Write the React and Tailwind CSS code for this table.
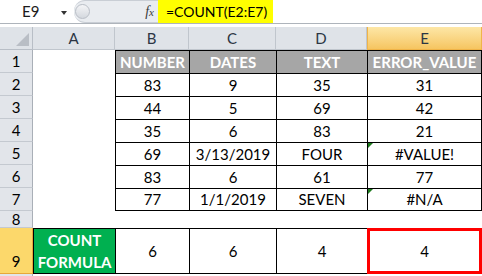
import React from "react";

const COLS = ["A", "B", "C", "D", "E"];

const DATA = [
  ["83", "9", "35", "31"],
  ["44", "5", "69", "42"],
  ["35", "6", "83", "21"],
  ["69", "3/13/2019", "FOUR", "#VALUE!"],
  ["83", "6", "61", "77"],
  ["77", "1/1/2019", "SEVEN", "#N/A"],
];

const HEAD = ["NUMBER", "DATES", "TEXT", "ERROR_VALUE"];

function RowHead({ n, active, className = "" }) {
  return (
    <div
      className={
        "flex justify-center border-r border-b " +
        (active
          ? "bg-[#fcd86b] border-r-[#e7a83a] border-b-[#e7a83a] "
          : "bg-[#e2e5ea] border-r-[#a9afb7] border-b-[#c4c9d0] ") +
        className
      }
    >
      {n}
    </div>
  );
}

function ErrorMark() {
  return (
    <span className="absolute left-0 top-0 w-0 h-0 border-t-[5px] border-r-[5px] border-t-[#1e7b1e] border-r-transparent" />
  );
}

export default function App() {
  return (
    <div
      className="w-[482px] h-[276px] overflow-hidden bg-white text-[15px] text-black"
      style={{ fontFamily: "Lato, 'Open Sans', sans-serif" }}
    >
      {/* formula bar */}
      <div className="flex h-[24px] border-b border-[#aeb4bb]">
        <div className="relative w-[74px] flex items-center bg-white">
          <span className="pl-[22px] text-[#1a1a1a]">E9</span>
          <span className="absolute left-[61px] top-[11px] w-0 h-0 border-l-[3px] border-r-[3px] border-t-[4px] border-l-transparent border-r-transparent border-t-[#333]" />
        </div>
        <div className="relative w-[84px] flex items-center bg-[#e9ecf0] border-y border-[#c9ced5] rounded-l-[11px]">
          <span className="ml-[1px] w-[15px] h-[15px] rounded-full bg-gradient-to-b from-[#f4f5f7] to-[#d4d8de] border border-[#b9bec6]" />
          <span
            className="ml-auto mr-[4px] text-[14px] italic text-[#3a3a3a]"
            style={{ fontFamily: "'Liberation Serif', serif" }}
          >
            f<span className="text-[11px]">x</span>
          </span>
        </div>
        <div className="w-[115px] flex items-center pl-[8px] bg-[#ffff00] text-[14px] text-black">
          =COUNT(E2:E7)
        </div>
        <div className="flex-1 bg-white" />
      </div>
      <div className="h-[3px] bg-white" />

      {/* sheet */}
      <div className="grid grid-cols-[33px_82px_74px_87px_91px_115px] grid-rows-[23px_23px_23px_23px_23px_23px_23px_23px_17px_46px_10px]">
        {/* column headers */}
        <div className="relative bg-[#dfe3e8] border-r border-b border-[#b8bec6]">
          <span
            className="absolute right-[3px] bottom-[3px] w-0 h-0"
            style={{ borderBottom: "13px solid #b9bec5", borderLeft: "13px solid transparent" }}
          />
        </div>
        {COLS.map((c) =>
          c === "E" ? (
            <div
              key={c}
              className="flex items-center justify-center bg-gradient-to-b from-[#fde7a6] to-[#f6c560] border-x border-b border-[#f0b449] text-[#2c3644]"
            >
              {c}
            </div>
          ) : (
            <div
              key={c}
              className="flex items-center justify-center bg-[#dfe3e8] border-r border-b border-[#c0c6cd] text-[#2c3644]"
            >
              {c}
            </div>
          )
        )}

        {/* row 1 */}
        <RowHead n="1" className="items-center" />
        <div className="bg-white" />
        {HEAD.map((h, i) => (
          <div
            key={h}
            className={
              "flex items-center justify-center bg-[#a6a6a6] text-white font-bold border-l border-t border-black " +
              (i === 3 ? "border-r" : "")
            }
          >
            {h}
          </div>
        ))}

        {/* rows 2-7 */}
        {DATA.map((row, r) => (
          <React.Fragment key={r}>
            <RowHead n={String(r + 2)} className="items-center" />
            <div className="bg-white" />
            {row.map((v, i) => (
              <div
                key={i}
                className={
                  "relative flex items-center justify-center border-l border-t border-black " +
                  (i === 3 ? "border-r " : "") +
                  (r === 5 ? "border-b" : "")
                }
              >
                {i === 3 && (r === 3 || r === 5) && <ErrorMark />}
                {v}
              </div>
            ))}
          </React.Fragment>
        ))}

        {/* row 8 */}
        <RowHead n="8" className="items-center leading-none" />
        <div className="col-span-5 bg-white" />

        {/* row 9 */}
        <RowHead n="9" active className="items-end pb-[1px]" />
        <div className="flex items-center justify-center bg-[#00b050] text-white font-bold text-center leading-[22px] border-y border-l border-black">
          COUNT
          <br />
          FORMULA
        </div>
        <div className="flex items-center justify-center border-y border-l border-black">6</div>
        <div className="flex items-center justify-center border-y border-l border-black">6</div>
        <div className="flex items-center justify-center border-y border-l border-black">4</div>
        <div className="flex items-center justify-center border-[3px] border-[#ff0000]">4</div>

        {/* row 10 */}
        <RowHead n="" />
        <div className="col-span-5 bg-white" />
      </div>
    </div>
  );
}
